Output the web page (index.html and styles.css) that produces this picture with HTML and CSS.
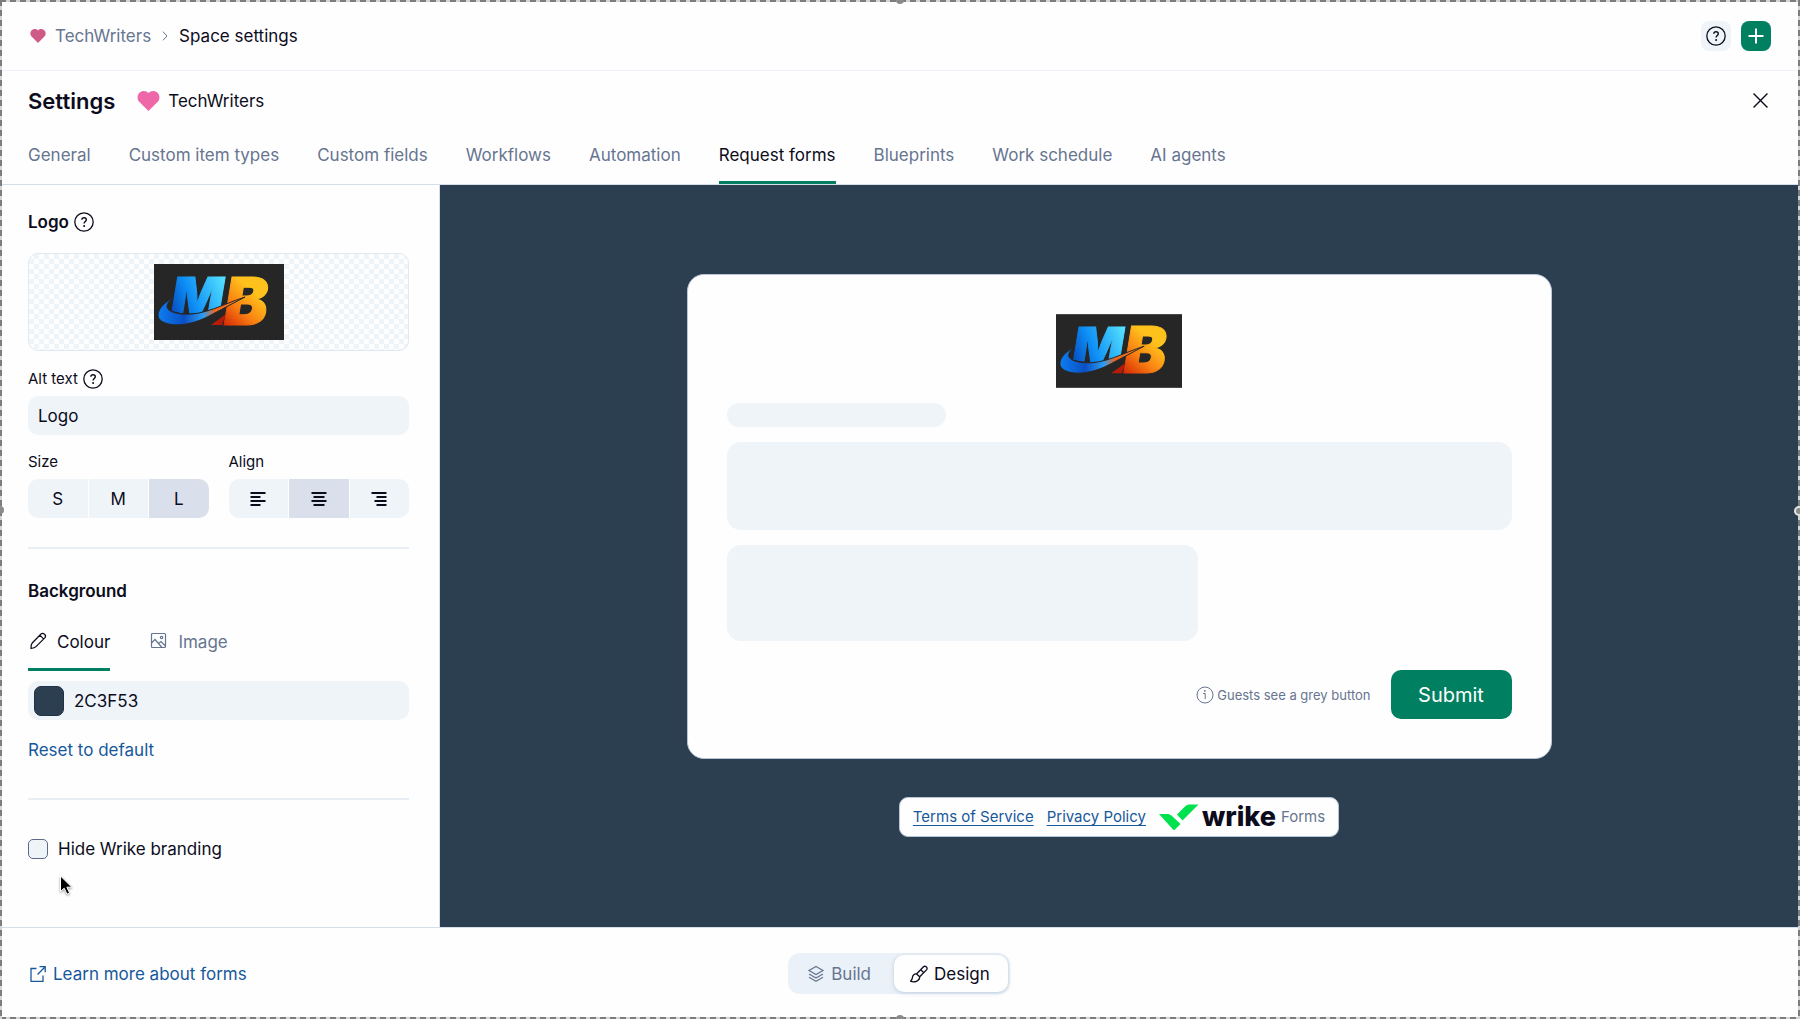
FILE: index.html
```
<!DOCTYPE html>
<html lang="en">
<head>
<meta charset="utf-8">
<title>Space settings</title>
<link rel="stylesheet" href="styles.css">
</head>
<body>
<svg class="defs" aria-hidden="true">
  <defs>
    <linearGradient id="blue" x1="0" y1=".8" x2="1" y2=".3"><stop offset="0" stop-color="#0546b8"/><stop offset=".4" stop-color="#0d8df5"/><stop offset="1" stop-color="#54e0ff"/></linearGradient>
    <linearGradient id="fire" x1=".3" y1=".2" x2="0" y2=".8"><stop offset="0" stop-color="#ffc21c"/><stop offset=".5" stop-color="#f98012"/><stop offset="1" stop-color="#d62a06"/></linearGradient>
    <linearGradient id="swoosh" x1="0" y1="0" x2="1" y2="0"><stop offset="0" stop-color="#0e7df0"/><stop offset=".3" stop-color="#0a4fc4"/><stop offset=".52" stop-color="#2c9df2"/><stop offset=".66" stop-color="#f0641a"/><stop offset="1" stop-color="#ff8d1c"/></linearGradient>
    <symbol id="mb" viewBox="0 0 130 76">
      <rect width="130" height="76" fill="#262626"/>
      <text class="mb-m" x="17" y="53" fill="url(#blue)">M</text>
      <path d="M14 46Q45 56 78 38V62H14Z" fill="#262626"/>
      <text class="mb-b" x="70" y="61" fill="url(#fire)">B</text>
      <path d="M57 61 72 50 68 61Z" fill="#b81c06"/>
      <path d="M19 34C5 41-1 53 9 58c12 6 32 2 48-7L91 33C69 40 50 52 28 50 10 48 10 41 19 34Z" fill="url(#swoosh)" stroke="#262626" stroke-width="1"/>
    </symbol>
    <symbol id="heart" viewBox="0 0 22 20"><path d="M11 20 1.500 10.500C-1 7.500 0 3 2.500 1.300 5.500-.8 9 0 11 2 13 0 16.500-.8 19.500 1.300 22 3 23 7.500 20.500 10.500Z" fill="currentColor"/></symbol>
    <symbol id="help" viewBox="0 0 20 20"><circle cx="10" cy="10" r="9.200" fill="none" stroke="currentColor" stroke-width="1.300"/><path d="M7.800 7.800C7.900 6.400 8.800 5.700 10 5.700s2.300.8 2.300 2c0 1.700-2.200 1.900-2.200 3.900" fill="none" stroke="currentColor" stroke-width="1.400"/><circle cx="10.100" cy="14" r="1" fill="currentColor"/></symbol>
  </defs>
</svg>

<div class="app">
  <header class="topbar">
    <nav class="crumbs" aria-label="Breadcrumb">
      <svg class="crumb-heart" aria-hidden="true"><use href="#heart"/></svg>
      <a href="#">TechWriters</a>
      <svg class="chevron" viewBox="0 0 6 10" aria-hidden="true"><path d="M1 .7 5 5 1 9.300"/></svg>
      <span>Space settings</span>
    </nav>
    <div class="actions">
      <button class="square" type="button" aria-label="Help"><svg class="help" aria-hidden="true"><use href="#help"/></svg></button>
      <button class="square add" type="button" aria-label="Add"><svg viewBox="0 0 16 16" aria-hidden="true"><path d="M8 .5v15M.5 8h15"/></svg></button>
    </div>
  </header>

  <div class="title-row">
    <h1>Settings</h1>
    <svg class="title-heart" aria-hidden="true"><use href="#heart"/></svg>
    <span>TechWriters</span>
    <button class="close" type="button" aria-label="Close"><svg viewBox="0 0 14 14" aria-hidden="true"><path d="m.5.5 13 13m0-13-13 13"/></svg></button>
  </div>

  <nav class="tabs" aria-label="Settings sections">
    <a href="#">General</a>
    <a href="#">Custom item types</a>
    <a href="#">Custom fields</a>
    <a href="#">Workflows</a>
    <a href="#">Automation</a>
    <a href="#" class="active" aria-current="page">Request forms</a>
    <a href="#">Blueprints</a>
    <a href="#">Work schedule</a>
    <a href="#">AI agents</a>
  </nav>

  <main class="workspace">
    <aside class="sidebar">
      <h2>Logo <svg class="help" aria-hidden="true"><use href="#help"/></svg></h2>
      <div class="logo-box"><svg class="logo-thumb" role="img" aria-label="Logo"><use href="#mb"/></svg></div>

      <label class="field-label alt-label" for="alt">Alt text <svg class="help" aria-hidden="true"><use href="#help"/></svg></label>
      <input class="text-input" id="alt" type="text" value="Logo">

      <div class="options">
        <div>
          <span class="field-label" id="size-label">Size</span>
          <div class="segments" role="group" aria-labelledby="size-label">
            <button type="button">S</button>
            <button type="button">M</button>
            <button type="button" class="on" aria-pressed="true">L</button>
          </div>
        </div>
        <div>
          <span class="field-label" id="align-label">Align</span>
          <div class="segments" role="group" aria-labelledby="align-label">
            <button type="button" aria-label="Left"><svg viewBox="0 0 16 16" aria-hidden="true"><path d="M.5 2h15M.5 6h10M.5 10h15M.5 14h10"/></svg></button>
            <button type="button" class="on" aria-label="Centre" aria-pressed="true"><svg viewBox="0 0 16 16" aria-hidden="true"><path d="M.5 2h15M2.500 6h11M.5 10h15M2.500 14h11"/></svg></button>
            <button type="button" aria-label="Right"><svg viewBox="0 0 16 16" aria-hidden="true"><path d="M.5 2h15M5.500 6h10M3.500 10h12M5.500 14h10"/></svg></button>
          </div>
        </div>
      </div>

      <hr>

      <h2>Background</h2>
      <div class="subtabs" role="tablist">
        <button type="button" role="tab" class="active" aria-selected="true"><svg viewBox="0 0 20 20" aria-hidden="true"><path d="M3 17.500c0-3 .3-4.500 1.200-5.500L13 3c2.200-2 5.800 1.300 4 3.700L8 15.700C7 16.800 5.500 17.300 3 17.500ZM11.800 4.200l4 4"/></svg>Colour</button>
        <button type="button" role="tab" aria-selected="false"><svg viewBox="0 0 20 20" aria-hidden="true"><rect x="2.500" y="2.500" width="14" height="14" rx="1"/><circle cx="12.600" cy="6.500" r="1.200"/><path d="m2.500 12 3.500-3.500 7 8M9.500 12.500l2.500-2 4.500 4.500"/></svg>Image</button>
      </div>
      <div class="colour-input">
        <span class="swatch"></span>
        <input type="text" value="2C3F53" aria-label="Background colour">
      </div>
      <a class="reset" href="#">Reset to default</a>

      <hr>

      <label class="check"><input type="checkbox"> Hide Wrike branding</label>
      <svg class="cursor" viewBox="0 0 14 22" aria-hidden="true"><path d="M1.500 1v15.500l3.700-3.300 2.800 6 2.600-1.200-2.700-5.800h5Z"/></svg>
    </aside>

    <section class="preview" aria-label="Form preview">
      <div class="card">
        <svg class="card-logo" role="img" aria-label="Logo"><use href="#mb"/></svg>
        <div class="bone bone-title"></div>
        <div class="bone bone-wide"></div>
        <div class="bone bone-half"></div>
        <div class="submit-row">
          <span class="hint"><svg viewBox="0 0 18 18" aria-hidden="true"><circle cx="9" cy="9" r="8"/><path d="M7 7.500h2.200v5.500"/><circle cx="8.800" cy="5" r=".6"/></svg>Guests see a grey button</span>
          <button class="submit" type="button">Submit</button>
        </div>
      </div>
      <div class="legal">
        <a href="#">Terms of Service</a>
        <a href="#">Privacy Policy</a>
        <span class="brand">
          <svg viewBox="0 0 40 26" aria-hidden="true"><path d="M0 10h9.500l3 1.500 9 8.500-6.500 6.500ZM18 10.500 26 2.500C27.500 1 29 .5 31 .5h8.500L23.500 16.500Z"/></svg>
          <strong>wrike</strong>
          <span class="forms">Forms</span>
        </span>
      </div>
    </section>
  </main>

  <footer class="bottombar">
    <a href="#"><svg viewBox="0 0 16 16" aria-hidden="true"><path d="M6.500 2.500H1v12.800h12V9.500M9.500.7h5.700v5.600M15 1 7.500 8.500"/></svg>Learn more about forms</a>
    <div class="mode">
      <button type="button"><svg viewBox="0 0 18 18" aria-hidden="true"><path d="m9 1.500 7 4-7 4-7-4ZM2 9l7 4 7-4M2 12.300l7 4 7-4"/></svg>Build</button>
      <button type="button" class="on" aria-pressed="true"><svg viewBox="0 0 18 18" aria-hidden="true"><path d="m6.500 9 7-7.200c1.700-1.600 4.500.8 3.200 2.800l-7 7.200M6.500 9c-2.200-.3-3.800 1.200-4 3.300-.1 1.700-.6 2.700-2 3.900 3.300 1.300 9.400.4 9.200-4.400M6.500 9l3.200 2.800M11 5l3 3"/></svg>Design</button>
    </div>
  </footer>
</div>

<div class="frame" aria-hidden="true">
  <i class="edge edge-top"></i><i class="edge edge-right"></i><i class="edge edge-bottom"></i><i class="edge edge-left"></i>
  <i class="dot dot-top"></i><i class="dot dot-right"></i><i class="dot dot-bottom"></i><i class="dot dot-left"></i>
</div>
</body>
</html>
```
FILE: styles.css
```
:root {
  --ink: #0c0c1c;
  --muted: #667590;
  --soft: #eff4f9;
  --paper: #fefefe;
  --green: #008060;
  --link: #17589c;
  --navy: #2c3f50;
}

* { box-sizing: border-box; }

body {
  margin: 0;
  color: var(--ink);
  background: var(--paper);
  font: 17px/24px Inter, "Liberation Sans", sans-serif;
}

button, input { font: inherit; color: inherit; }
button { padding: 0; border: 0; background: none; }
a { color: inherit; text-decoration: none; }
svg { display: block; flex: none; fill: none; stroke: currentColor; }
use, symbol { stroke: none; }
h1, h2 { margin: 0; font-weight: 600; }
h1 { font-size: 22px; line-height: 28px; }
h2 { display: flex; align-items: center; gap: 5px; font-size: 17px; line-height: 24px; }

.defs { position: absolute; width: 0; height: 0; }
.mb-m { font: italic 900 55px Inter, sans-serif; stroke: url(#blue); stroke-width: 1px; }
.mb-b { font: italic 900 66px Inter, sans-serif; stroke: url(#fire); stroke-width: 1px; }

.app { display: flex; flex-direction: column; min-height: 100vh; }

/* Top bar */
.topbar {
  display: flex;
  align-items: center;
  justify-content: space-between;
  height: 71px;
  padding: 1px 29px 0 30px;
  border-bottom: 1px solid #edf3f8;
}
.crumbs { display: flex; align-items: center; }
.crumbs a { margin: 0 11px 0 9px; color: var(--muted); }
.crumb-heart { width: 16px; height: 14px; color: #cf5a85; }
.chevron { width: 6px; height: 10px; margin-right: 11px; color: var(--muted); }
.actions { display: flex; gap: 10px; }
.square {
  display: grid;
  place-items: center;
  width: 30px;
  height: 30px;
  border-radius: 8px;
  background: var(--soft);
}
.help { width: 20px; height: 20px; stroke: none; }
.add { background: var(--green); color: #fff; }
.add svg { width: 16px; height: 16px; stroke-width: 2; }

/* Title and tabs */
.title-row { display: flex; align-items: center; height: 59px; padding: 0 32px 0 28px; }
.title-heart { width: 23px; height: 20px; margin: 0 8px 0 22px; color: #ee67a9; }
.close { margin-left: auto; }
.close svg { width: 15px; height: 15px; stroke-width: 1.3; }
.tabs {
  display: flex;
  gap: 38px;
  padding: 0 28px;
  border-bottom: 1px solid #d5dee8;
  color: var(--muted);
}
.tabs a { padding: 13px 0 14px; border-bottom: 3px solid transparent; }
.tabs .active { color: var(--ink); border-color: var(--green); }

/* Sidebar */
.workspace { flex: 1; display: grid; grid-template-columns: 440px 1fr; }
.sidebar {
  position: relative;
  padding: 25px 30px 0 28px;
  border-right: 1px solid #d5dee8;
}
.logo-box {
  display: grid;
  place-items: center;
  height: 98px;
  margin: 19px 0 18px;
  border: 1px solid #e2e7f1;
  border-radius: 10px;
  background: repeating-conic-gradient(#eff4f9 0 25%, #fefefe 0 50%) 0 0 / 10px 10px;
}
.logo-thumb { width: 130px; height: 76px; stroke: none; }
.field-label { display: flex; align-items: center; gap: 5px; font-size: 15px; line-height: 20px; }
.text-input {
  display: block;
  width: 100%;
  height: 39px;
  margin-top: 7px;
  padding: 0 10px;
  border: 0;
  border-radius: 10px;
  background: var(--soft);
}
.options { display: grid; grid-template-columns: 1fr 1fr; gap: 20px; margin-top: 17px; }
.segments {
  display: grid;
  grid-template-columns: repeat(3, 1fr);
  gap: 1px;
  height: 39px;
  margin-top: 7px;
  border-radius: 10px;
  overflow: hidden;
}
.segments button { display: grid; place-items: center; background: var(--soft); }
.segments .on { background: #d9dfeb; }
.segments svg { width: 16px; height: 16px; stroke-width: 1.8; }
hr { height: 2px; margin: 29px 0 30px; border: 0; background: #e9edf4; }

.subtabs { display: flex; gap: 39px; margin-top: 27px; color: var(--muted); }
.subtabs button { display: flex; gap: 9px; padding: 0 0 14px; border-bottom: 3px solid transparent; }
.subtabs svg { width: 20px; height: 20px; margin-top: 1px; stroke-width: 1.2; }
.subtabs .active { color: var(--ink); border-color: var(--green); }
.colour-input {
  display: flex;
  align-items: center;
  gap: 10px;
  height: 39px;
  margin-top: 10px;
  padding: 0 6px;
  border-radius: 10px;
  background: var(--soft);
}
.colour-input input { flex: 1; min-width: 0; padding: 0; border: 0; background: none; }
.swatch { width: 30px; height: 30px; border: 1px solid #203247; border-radius: 7px; background: var(--navy); }
.reset { display: block; margin-top: 18px; color: var(--link); }
.reset + hr { margin-top: 36px; margin-bottom: 37px; }
.check { display: flex; align-items: center; gap: 10px; }
.check input {
  appearance: none;
  width: 20px;
  height: 20px;
  margin: 0;
  border: 1px solid #5b6a86;
  border-radius: 5px;
  background: var(--soft);
}
.cursor {
  position: absolute;
  left: 59px;
  top: 690px;
  width: 14px;
  height: 22px;
  fill: #000;
  stroke: #fff;
  filter: drop-shadow(0 1px 1px #0006);
}

/* Form preview */
.preview {
  display: flex;
  flex-direction: column;
  align-items: center;
  padding: 89px 34px 90px 32px;
  background: var(--navy);
}
.card {
  display: flex;
  flex-direction: column;
  width: 100%;
  max-width: 865px;
  padding: 39px 39px;
  border: 1px solid #b9c5d6;
  border-radius: 17px;
  background: var(--paper);
}
.card-logo { align-self: center; width: 126px; height: 74px; stroke: none; }
.bone { border-radius: 14px; background: var(--soft); }
.bone-title { width: 28%; height: 24px; margin: 15px 0 15px; }
.bone-wide { height: 88px; }
.bone-half { width: 60%; height: 96px; margin: 15px 0 29px; }
.submit-row { display: flex; align-items: center; justify-content: flex-end; gap: 20px; }
.hint { display: flex; align-items: center; gap: 3px; color: var(--muted); font-size: 13px; }
.hint svg { width: 18px; height: 18px; }
.submit {
  width: 121px;
  height: 49px;
  border-radius: 10px;
  background: var(--green);
  color: #fff;
  font-size: 20px;
}
.legal {
  display: flex;
  align-items: center;
  gap: 13px;
  height: 40px;
  margin-top: 38px;
  padding: 0 13px;
  border: 1px solid #b9c5d6;
  border-radius: 9px;
  background: var(--paper);
  font-size: 15px;
}
.legal a { color: var(--link); text-decoration: underline; text-underline-offset: 3px; }
.brand { display: flex; align-items: center; }
.brand svg { width: 40px; height: 26px; fill: #00e14e; stroke: none; }
.brand strong { margin: 0 5px 0 3px; font: 800 27px/36px Inter, sans-serif; }
.forms { color: var(--muted); }

/* Bottom bar */
.bottombar {
  display: grid;
  grid-template-columns: 1fr auto 1fr;
  align-items: center;
  height: 92px;
  padding: 0 32px 0 30px;
  border-top: 1px solid #d5dee8;
}
.bottombar a { display: flex; align-items: center; gap: 7px; color: var(--link); }
.bottombar a svg { width: 16px; height: 16px; stroke-width: 1.3; }
.mode { display: flex; padding: 2px; border-radius: 12px; background: #ebf1f8; color: var(--muted); }
.mode button {
  display: flex;
  align-items: center;
  gap: 6px;
  height: 37px;
  padding: 0 23px 0 17px;
  border-radius: 10px;
}
.mode .on { padding: 0 18px 0 16px; background: var(--paper); color: var(--ink); box-shadow: 0 1px 4px #9fb2cf99; }
.mode svg { width: 18px; height: 18px; stroke-width: 1.3; }

/* Selection frame drawn over the window edges */
.frame { position: fixed; inset: 0; pointer-events: none; }
.edge { position: absolute; }
.edge-top, .edge-bottom { left: 0; right: 0; height: 2px; background: repeating-linear-gradient(90deg, #7d7d7d 0 6px, #d5d5d5 6px 10px); }
.edge-left, .edge-right { top: 0; bottom: 0; width: 2px; background: repeating-linear-gradient(#7d7d7d 0 6px, #d5d5d5 6px 10px); }
.edge-top { top: 0; }
.edge-bottom { bottom: 0; }
.edge-left { left: 0; }
.edge-right { right: 0; }
.dot { position: absolute; width: 8px; height: 8px; border-radius: 50%; background: #8b8b8b; }
.dot-top, .dot-bottom { left: calc(50% - 4px); }
.dot-left, .dot-right { top: calc(50% - 4px); }
.dot-top { top: -4px; }
.dot-bottom { bottom: -4px; }
.dot-left { left: -4px; }
.dot-right { right: -4px; width: 10px; height: 10px; border: 2px solid #e4e4e4; }
```
